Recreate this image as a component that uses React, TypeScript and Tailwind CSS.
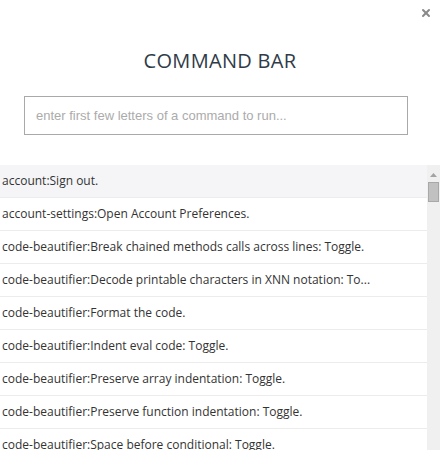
import { X } from "lucide-react";

const commands = [
  "account:Sign out.",
  "account-settings:Open Account Preferences.",
  "code-beautifier:Break chained methods calls across lines: Toggle.",
  "code-beautifier:Decode printable characters in XNN notation: To...",
  "code-beautifier:Format the code.",
  "code-beautifier:Indent eval code: Toggle.",
  "code-beautifier:Preserve array indentation: Toggle.",
  "code-beautifier:Preserve function indentation: Toggle.",
  "code-beautifier:Space before conditional: Toggle.",
  "code-beautifier:Unescape printable characters: Toggle."
];

export default function App() {
  return (
    <div className="relative h-[450px] w-[440px] overflow-hidden bg-white font-['Open_Sans',sans-serif]">
      <button
        type="button"
        className="absolute right-[7px] top-[6px] grid h-[14px] w-[14px] place-items-center text-[#8a8a8a]"
        aria-label="Close"
      >
        <X className="h-[12px] w-[12px]" strokeWidth={4} aria-hidden="true" />
      </button>

      <h1 className="pt-[47px] text-center text-[20px] leading-[28px] font-medium tracking-[0.3px] text-[#2f3b48]">
        COMMAND BAR
      </h1>

      <div className="mt-[21px] px-[24px] pr-[32px]">
        <input
          type="text"
          placeholder="enter first few letters of a command to run..."
          className="h-[39px] w-full border border-[#a9a9a9] px-[11px] font-['Liberation_Sans',sans-serif] text-[13px] text-[#333] outline-none placeholder:text-[#ababab]"
        />
      </div>

      <div className="mt-[30px] flex h-[300px]">
        <ul className="min-w-0 flex-1">
          {commands.map((command, index) => (
            <li
              key={command}
              className={`h-[33px] truncate border-b border-[#ececec] pl-[2px] text-[12px] leading-[32px] text-[#333] ${
                index === 0 ? "bg-[#f5f5f7]" : "bg-white"
              }`}
            >
              {command}
            </li>
          ))}
        </ul>
        <div className="flex w-[13px] flex-col items-center bg-[#f0f0f0]">
          <svg width="7" height="4" viewBox="0 0 7 4" className="mt-[8px]" aria-hidden="true">
            <polygon points="3.5,0 7,4 0,4" fill="#a3a3a3" />
          </svg>
          <div className="mt-[5px] h-[20px] w-[11px] border border-[#a8a8a8] bg-[#c1c1c1]" />
        </div>
      </div>
    </div>
  );
}
